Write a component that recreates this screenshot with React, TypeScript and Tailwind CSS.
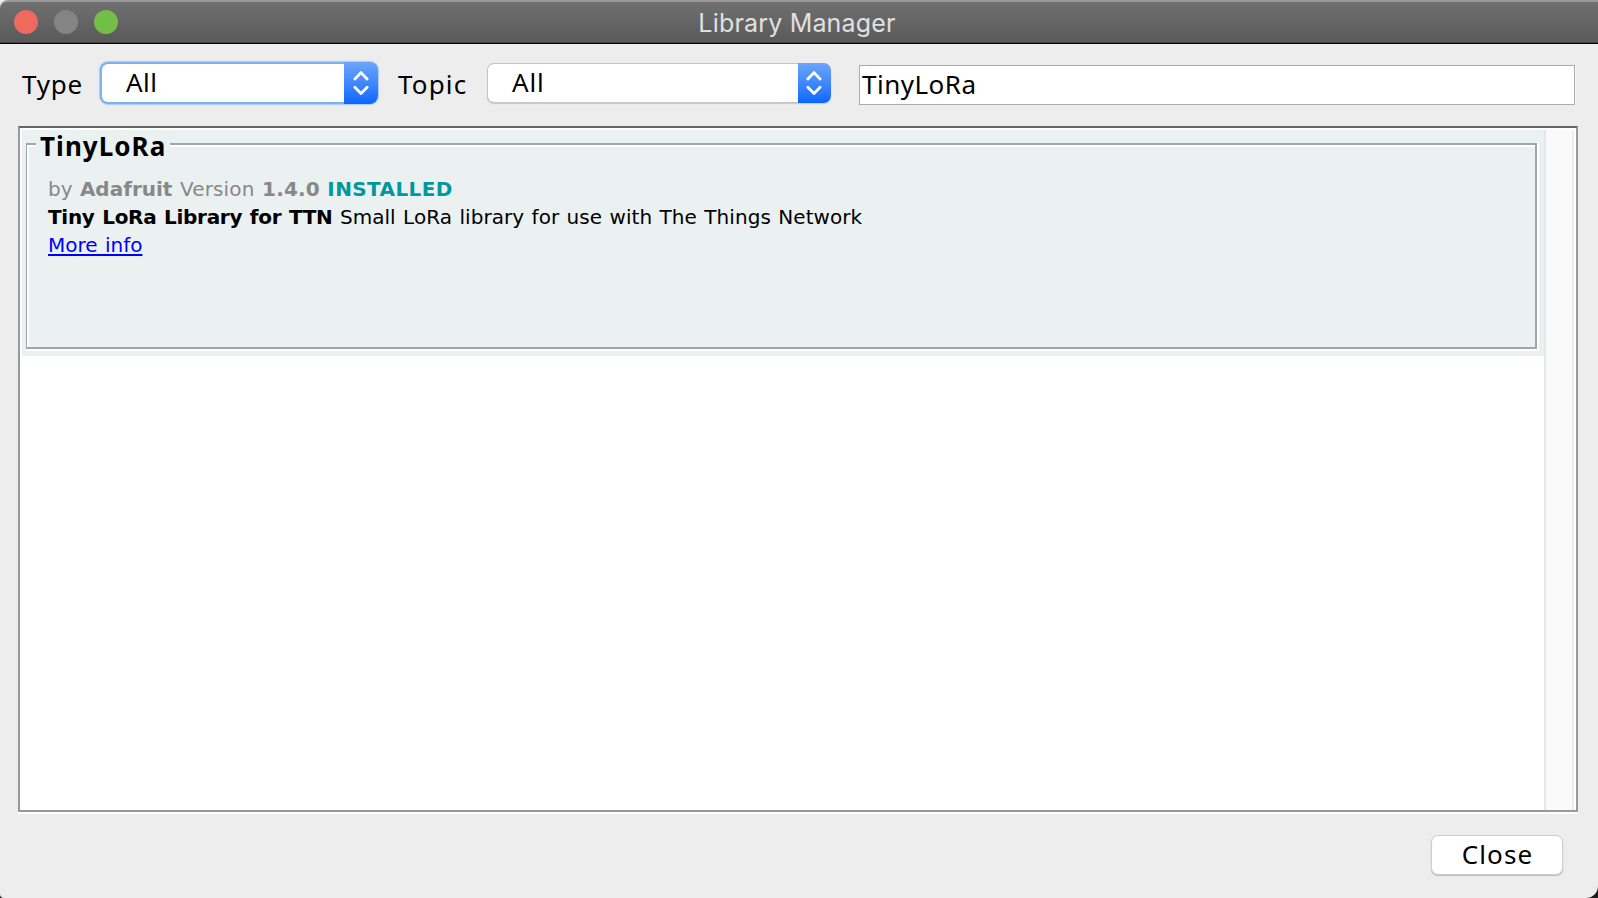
import type { ReactNode } from "react";

function Chevrons() {
  return (
    <svg width="16" height="26" viewBox="0 0 16 26" fill="none" stroke="#fff" strokeWidth="2.8" strokeLinecap="round" strokeLinejoin="round">
      <path d="M1.9 9 L8 2.6 L14.1 9" />
      <path d="M1.9 17.2 L8 23.4 L14.1 17.2" />
    </svg>
  );
}

function Stepper({ className }: { className: string }) {
  return (
    <span className={`flex shrink-0 items-center justify-center bg-linear-to-b from-[#6ba5fb] to-[#0566fe] pr-px ${className}`}>
      <Chevrons />
    </span>
  );
}

function Label({ children, className }: { children: ReactNode; className: string }) {
  return <span className={`block leading-[30px] text-[26px] whitespace-nowrap ${className}`}>{children}</span>;
}

function TitleBar() {
  return (
    <header className="relative flex h-11 shrink-0 items-center justify-center rounded-tl-[8px] border-t-2 border-b border-t-[#989898] border-b-black bg-linear-to-b from-[#707070] to-[#595959] pr-1 shadow-[inset_0_-1px_0_#454545]">
      <div className="absolute top-2 left-3.5 flex gap-4">
        <span className="size-6 rounded-full bg-[#ee6a5f]" />
        <span className="size-6 rounded-full bg-[#848484]" />
        <span className="size-6 rounded-full bg-[#72be47]" />
      </div>
      <h1 className="font-['Inter',sans-serif] text-[25px] leading-[30px] tracking-[0.18px] text-[#e0e0e0]">Library Manager</h1>
    </header>
  );
}

function Toolbar() {
  return (
    <div className="flex h-[82px] shrink-0 items-start pl-[22px]">
      <Label className="mt-[25px] w-[78px] tracking-[0.75px]">Type</Label>
      <button className="mt-[18px] flex h-[42px] w-[278px] overflow-hidden rounded-[8px] bg-[#7db2ee] text-left shadow-[0_0_1px_1px_#a9cbf0]">
        <span className="my-[2px] ml-[2px] h-[38px] flex-1 rounded-l-[6px] bg-white pl-6">
          <Label className="mt-[3px] tracking-[0.5px]">All</Label>
        </span>
        <Stepper className="h-[42px] w-[34px] rounded-r-[8px]" />
      </button>
      <Label className="mt-[25px] ml-5 w-[89px] tracking-[1.15px]">Topic</Label>
      <button className="mt-[19px] flex h-10 w-[344px] overflow-hidden rounded-[7px] bg-[#c4c4c4] text-left shadow-[0_1px_1px_#c8c8c8]">
        <span className="my-px ml-px h-[38px] flex-1 rounded-l-[6px] bg-white pl-[24px]">
          <Label className="mt-[3px] tracking-[0.8px]">All</Label>
        </span>
        <Stepper className="h-10 w-[33px] rounded-r-[7px]" />
      </button>
      <div className="mt-[21px] ml-7 h-10 w-[716px] border border-[#acacac] bg-white pl-0.5 shadow-[1px_0_0_#f8f8f8]">
        <Label className="mt-[3px] tracking-[0.5px]">TinyLoRa</Label>
      </div>
    </div>
  );
}

function LibraryCard() {
  return (
    <article className="h-[226px] bg-[#ebf1f1] pt-[13px] pl-1">
      <div className="h-[208px] w-[1513px] border-r-2 border-b-2 border-white">
        <div className="relative h-[206px] border-2 border-l border-[#a2a6a6]">
          <div className="h-[202px] border-t-2 border-l-2 border-white pt-[28px] pl-[19px] font-['DejaVu_Sans','Verdana',sans-serif] text-[20px] leading-7 [word-spacing:1px] whitespace-nowrap">
            <p className="text-[#888888]">
              <span>by </span>
              <b>Adafruit</b>
              <span className="tracking-[0.15px]"> Version </span>
              <b className="tracking-[0.2px]">1.4.0</b> <b className="tracking-[0.38px] text-[#00979d]">INSTALLED</b>
            </p>
            <p className="text-black">
              <b className="tracking-[-0.3px]">Tiny LoRa Library for TTN</b>
              <span className="tracking-[0.05px]"> Small LoRa library for use with The Things Network</span>
            </p>
            <p>
              <a className="text-[#0000ff] underline decoration-2 underline-offset-2">More info</a>
            </p>
          </div>
          <h2 className="absolute -top-[14px] left-[9px] w-[134px] bg-[#ebf1f1] pl-1 text-[26px] leading-[30px] font-bold tracking-[1.05px] whitespace-nowrap">TinyLoRa</h2>
        </div>
      </div>
    </article>
  );
}

export default function App() {
  return (
    <div className="flex h-[898px] w-[1598px] flex-col overflow-hidden bg-[#1c1c1c] font-['Noto_Sans','Lucida_Grande',sans-serif] text-black">
      <div className="flex h-[898px] flex-col rounded-br-[12px] rounded-bl-[4px] bg-[#ededed]">
        <TitleBar />
        <Toolbar />
        <main className="ml-[18px] flex h-[686px] w-[1560px] shrink-0 border-2 border-[#999999] border-t-[#666666] bg-white pt-0.5 pr-0.5 pl-0.5 shadow-[0_2px_0_#fff]">
          <div className="w-[1522px]">
            <LibraryCard />
          </div>
          <div className="w-[30px] border-r-2 border-l-2 border-r-[#ededed] border-l-[#e7e7e7] bg-[#fafafa]" />
        </main>
        <footer className="flex flex-1 justify-end pt-[23px] pr-[35px]">
          <button className="flex h-10 w-[132px] items-center justify-center rounded-[7px] border border-[#cccccc] bg-white pb-0.5 pl-px shadow-[0_1px_1px_#bbb]">
            <Label className="tracking-[1.1px]">Close</Label>
          </button>
        </footer>
      </div>
    </div>
  );
}
